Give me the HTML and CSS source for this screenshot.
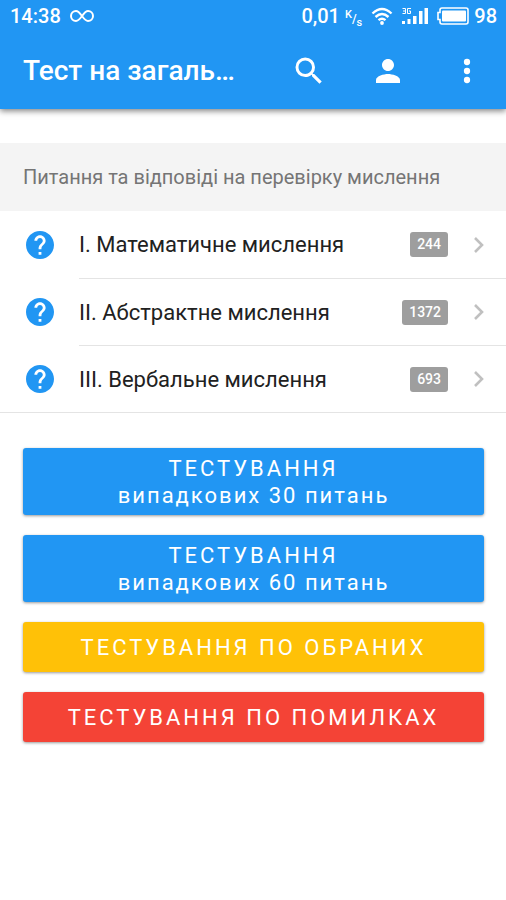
FILE: index.html
```html
<!DOCTYPE html>
<html lang="uk">
<head>
<meta charset="utf-8">
<meta name="viewport" content="width=device-width, initial-scale=1">
<title>Тест на загаль…</title>
<link rel="stylesheet" href="styles.css">
</head>
<body>
<svg class="defs" aria-hidden="true">
  <symbol id="help" viewBox="2 2 20 20"><path d="M12 2C6.48 2 2 6.48 2 12s4.480 10 10 10 10-4.480 10-10S17.520 2 12 2zm1 17h-2v-2h2v2zm2.070-7.750l-.9.920C13.450 12.900 13 13.500 13 15h-2v-.5c0-1.100.450-2.100 1.170-2.830l1.240-1.260c.370-.360.590-.860.590-1.410 0-1.100-.9-2-2-2s-2 .9-2 2H8c0-2.210 1.790-4 4-4s4 1.790 4 4c0 .880-.360 1.680-.930 2.250z"/></symbol>
  <symbol id="chevron" viewBox="0 0 12 18"><path d="M2 2l7 7-7 7" fill="none" stroke="currentColor" stroke-width="2.600"/></symbol>
</svg>
<header class="top">
  <div class="status">
    <div class="status-group">
      <span>14:38</span>
      <svg class="infinity" viewBox="0 0 24 14" aria-hidden="true"><path d="M12 7C9.500 3.500 8.500 2 6 2a5 5 0 0 0 0 10c2.500 0 3.500-1.500 6-5s3.500-5 6-5a5 5 0 0 1 0 10c-2.500 0-3.500-1.500-6-5z"/></svg>
    </div>
    <div class="status-group">
      <span class="speed">0,01 <span class="unit"><sup>K</sup>/<sub>s</sub></span></span>
      <svg class="wifi" viewBox="0 0 22 18" aria-hidden="true"><path d="M1.500 6.500q9.500-9 19 0M4.500 10q6.500-6 13 0M7.500 13.200q3.500-3 7 0" fill="none" stroke="currentColor" stroke-width="2.400"/><circle cx="11" cy="16" r="1.900" fill="currentColor"/></svg>
      <svg class="signal" viewBox="0 0 26 18" aria-hidden="true"><path d="M0 14h3v3H0zM5.500 12h3v5h-3zM11 9h3.500v8H11zM17 4h3.500v13H17zM22.500 1H26v16h-3.500z" fill="currentColor"/><path d="M.5 1.500h3v5h-3M1 4h2.500M9 1.500H5.500v5h3V4H7" fill="none" stroke="currentColor"/></svg>
      <span class="charge"><svg class="battery" viewBox="0 0 32 18" aria-hidden="true"><path d="M5 1h24q2 0 2 2v12q0 2-2 2H5q-2 0-2-2v-2.500H1v-7h2V3q0-2 2-2z" fill="none" stroke="currentColor" stroke-width="1.600"/><rect x="5" y="3.500" width="24" height="11" rx="1" fill="currentColor"/></svg>98</span>
    </div>
  </div>
  <div class="navbar">
    <h1 class="title">Тест на загаль…</h1>
    <nav class="actions">
      <button class="icon-button" aria-label="Пошук"><svg viewBox="0 0 24 24"><path d="M15.500 14h-.790l-.280-.270A6.471 6.471 0 0 0 16 9.500 6.500 6.500 0 1 0 9.500 16c1.610 0 3.090-.590 4.230-1.570l.270.280v.790l5 4.990L20.490 19l-4.990-5zm-6 0C7.010 14 5 11.990 5 9.500S7.010 5 9.500 5 14 7.010 14 9.500 11.990 14 9.500 14z"/></svg></button>
      <button class="icon-button" aria-label="Профіль"><svg viewBox="0 0 24 24"><path d="M12 12c2.210 0 4-1.790 4-4s-1.790-4-4-4-4 1.790-4 4 1.790 4 4 4zm0 2c-2.670 0-8 1.340-8 4v2h16v-2c0-2.660-5.330-4-8-4z"/></svg></button>
      <button class="icon-button" aria-label="Меню"><svg viewBox="0 0 24 24"><circle cx="12" cy="6" r="2.100"/><circle cx="12" cy="12" r="2.100"/><circle cx="12" cy="18" r="2.100"/></svg></button>
    </nav>
  </div>
</header>
<main>
  <h2 class="section-title">Питання та відповіді на перевірку мислення</h2>
  <ul class="topics">
    <li><a class="topic" href="#math"><svg class="help" aria-hidden="true"><use href="#help"/></svg><span class="topic-body"><span class="topic-name">I. Математичне мислення</span><span class="badge">244</span><svg class="chevron" aria-hidden="true"><use href="#chevron"/></svg></span></a></li>
    <li><a class="topic" href="#abstract"><svg class="help" aria-hidden="true"><use href="#help"/></svg><span class="topic-body"><span class="topic-name">II. Абстрактне мислення</span><span class="badge">1372</span><svg class="chevron" aria-hidden="true"><use href="#chevron"/></svg></span></a></li>
    <li><a class="topic" href="#verbal"><svg class="help" aria-hidden="true"><use href="#help"/></svg><span class="topic-body"><span class="topic-name">III. Вербальне мислення</span><span class="badge">693</span><svg class="chevron" aria-hidden="true"><use href="#chevron"/></svg></span></a></li>
  </ul>
  <div class="tests">
    <button class="test">ТЕСТУВАННЯ<span class="test-detail">випадкових 30 питань</span></button>
    <button class="test">ТЕСТУВАННЯ<span class="test-detail">випадкових 60 питань</span></button>
    <button class="test favorites">ТЕСТУВАННЯ ПО ОБРАНИХ</button>
    <button class="test mistakes">ТЕСТУВАННЯ ПО ПОМИЛКАХ</button>
  </div>
</main>
</body>
</html>
```
FILE: styles.css
```css
* {
  box-sizing: border-box;
}

body {
  margin: 0;
  background: #fff;
  color: #212121;
  font-family: Roboto, "Liberation Sans", sans-serif;
}

button {
  border: 0;
  padding: 0;
  font: inherit;
  color: inherit;
  cursor: pointer;
}

.defs {
  display: none;
}

.top {
  background: #2196f3;
  color: #fff;
  box-shadow: 0 2px 6px rgba(0, 0, 0, 0.5);
}

.status {
  display: flex;
  justify-content: space-between;
  height: 32px;
  padding: 0 9px 0 10px;
  font-size: 20px;
  font-weight: 500;
}

.status-group {
  display: flex;
  align-items: center;
  gap: 9px;
}

.infinity {
  width: 24px;
  height: 14px;
  fill: none;
  stroke: currentColor;
  stroke-width: 2;
}

.unit {
  font-size: 12px;
}

.unit sup,
.unit sub {
  font-size: 11px;
  line-height: 0;
}

.wifi {
  width: 22px;
  height: 18px;
}

.signal {
  width: 26px;
  height: 18px;
}

.charge {
  display: flex;
  align-items: center;
  gap: 5px;
}

.battery {
  width: 32px;
  height: 18px;
}

.navbar {
  display: flex;
  align-items: center;
  justify-content: space-between;
  height: 77px;
  padding-left: 23px;
}

.title {
  margin: 0;
  white-space: nowrap;
  font-size: 28px;
  font-weight: 500;
}

.actions {
  display: flex;
}

.icon-button {
  display: flex;
  align-items: center;
  justify-content: center;
  width: 79px;
  height: 77px;
  background: none;
}

.icon-button svg {
  width: 36px;
  height: 36px;
  fill: currentColor;
}

.section-title {
  margin: 34px 0 0;
  padding: 0 23px;
  background: #f4f4f4;
  color: #757575;
  font-size: 20px;
  font-weight: 400;
  line-height: 68px;
}

.topics {
  margin: 0;
  padding: 0;
  list-style: none;
  border-bottom: 1px solid #e4e4e4;
}

.topic {
  display: flex;
  align-items: center;
  padding-left: 26px;
  color: inherit;
  text-decoration: none;
}

.help {
  width: 28px;
  height: 28px;
  margin-right: 25px;
  fill: #2196f3;
}

.topic-body {
  flex: 1;
  display: flex;
  align-items: center;
  height: 67px;
  padding-right: 21px;
}

.topics li + li .topic-body {
  border-top: 1px solid #e4e4e4;
}

.topic-name {
  flex: 1;
  font-size: 22px;
}

.badge {
  padding: 0 7px;
  border-radius: 3px;
  background: #9e9e9e;
  color: #fff;
  font-size: 14px;
  font-weight: 500;
  line-height: 25px;
}

.chevron {
  width: 12px;
  height: 18px;
  margin-left: 25px;
  color: #c0c0c0;
}

.tests {
  display: grid;
  gap: 20px;
  padding: 35px 22px 35px 23px;
}

.test {
  min-height: 50px;
  padding: 7px 0 6px;
  border-radius: 3px;
  background: #2196f3;
  box-shadow: 0 1px 3px rgba(0, 0, 0, 0.4);
  color: #fff;
  font-size: 22px;
  line-height: 27px;
  letter-spacing: 3px;
}

.test-detail {
  display: block;
  letter-spacing: 2px;
}

.favorites {
  background: #ffc107;
}

.mistakes {
  background: #f44336;
}
```
